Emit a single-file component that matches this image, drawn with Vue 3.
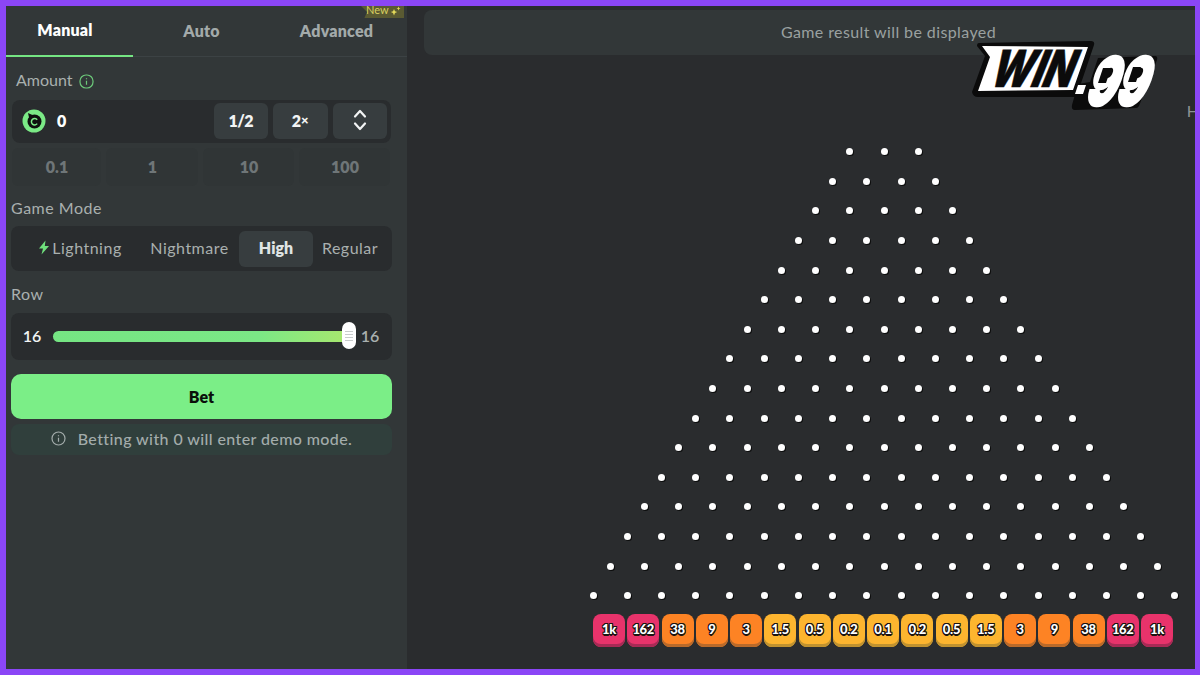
<template>
  <div class="frame">
    <aside class="panel">
      <nav class="tabs">
        <div v-for="t in tabs" :key="t" :class="['tab', 'tab-' + t.toLowerCase()]">{{ t }}</div>
        <div class="new-badge">
          New
          <svg width="11" height="10" viewBox="0 0 11 10"><path d="M4 3l1 2.200L7.200 6 5 7 4 9.500 3 7 .8 6 3 5.200zM8.500 .5l.6 1.400 1.400.6-1.400.6-.6 1.400-.6-1.400-1.400-.6 1.400-.6z" fill="#e3d95a"/></svg>
        </div>
      </nav>

      <div class="body">
        <div class="label amount-label">
          Amount
          <svg class="info" width="15" height="15" viewBox="0 0 15 15" fill="none" stroke="#6cc97a" stroke-width="1.200"><rect x="1" y="1" width="13" height="13" rx="6"/><path d="M7.500 6.800v4M7.500 4.200v1"/></svg>
        </div>
        <div class="amount-box">
          <svg class="coin" width="24" height="24" viewBox="0 0 24 24">
            <circle cx="12" cy="12" r="11.500" fill="#7bea86"/>
            <circle cx="12.500" cy="12.500" r="7" fill="#0e100e"/>
            <path d="M6 4l5.500 2.500-4 4z" fill="#0e100e"/>
            <path d="M15.200 10.800a3.200 3.200 0 1 0 0 3.800" fill="none" stroke="#7bea86" stroke-width="1.500"/>
          </svg>
          <span class="amount-value">0</span>
          <button class="mini half">1/2</button>
          <button class="mini">2<small>×</small></button>
          <button class="mini">
            <svg width="14" height="24" viewBox="0 0 14 24" fill="none" stroke="#f2f4f4" stroke-width="2.200" stroke-linecap="round" stroke-linejoin="round"><path d="M2 8.500l5-5.500 5 5.500M2 15.500l5 5.500 5-5.500"/></svg>
          </button>
        </div>
        <div class="quick">
          <div v-for="q in quick" :key="q" class="quick-item">{{ q }}</div>
        </div>

        <div class="label mode-label">Game Mode</div>
        <div class="modes">
          <div class="mode mode-lightning">
            <svg width="12" height="15" viewBox="0 0 12 15"><path d="M7.500 .5L1 8.500h4L3.500 14.500 11 6H6.800z" fill="#6fe07c"/></svg>
            Lightning
          </div>
          <div class="mode mode-nightmare">Nightmare</div>
          <div class="mode mode-high">High</div>
          <div class="mode mode-regular">Regular</div>
        </div>

        <div class="label row-label">Row</div>
        <div class="slider-box">
          <span class="slider-val">16</span>
          <div class="track">
            <div class="thumb"><i></i><i></i><i></i><i></i></div>
          </div>
          <span class="slider-max">16</span>
        </div>

        <button class="bet">Bet</button>
        <div class="notice">
          <svg width="15" height="15" viewBox="0 0 15 15" fill="none" stroke="#a3acab" stroke-width="1.200"><circle cx="7.500" cy="7.500" r="6.500"/><path d="M7.500 6.800v4M7.500 4.200v1"/></svg>
          Betting with 0 will enter demo mode.
        </div>
      </div>
    </aside>

    <main class="game">
      <div class="result">Game result will be displayed</div>
      <div class="board">
        <div v-for="(count, r) in rows" :key="r" class="peg-row">
          <span v-for="n in count" :key="n" class="peg"></span>
        </div>
        <div class="slots">
          <div v-for="(s, i) in slots" :key="i" :class="['slot', s.tone]">{{ s.value }}</div>
        </div>
      </div>

      <span class="cut-letter">H</span>
      <svg class="logo" width="192" height="80" viewBox="0 0 192 80">
        <path d="M8 9L120 7q4 0 3 4L106 61q-1 2-3 2H7q-5 0-6-5L14 22 6 12q0-3 2-3z" fill="#0b0b0b"/>
        <path d="M11 12L117 13 102 56 7 57 19 23z" fill="#fff"/>
        <text class="logo-win" transform="translate(16 53) skewX(-22)" textLength="82" lengthAdjust="spacingAndGlyphs">WIN</text>
        <path d="M127 24L184 22q3 0 2 4L168 72q-1 2-3 2L104 76q-4 0-3-5L107 50l12-2z" fill="#0b0b0b"/>
        <path d="M107 51h8l-3 9h-8z" fill="#fff"/>
        <text class="logo-99" transform="translate(112 71) skewX(-20)" textLength="60" lengthAdjust="spacingAndGlyphs">99</text>
        <path d="M132 34h8l-5 15h-8zM162 33h8l-5 15h-8z" fill="#0b0b0b"/>
      </svg>
    </main>
  </div>
</template>

<script setup>
const tabs = ['Manual', 'Auto', 'Advanced']
const quick = ['0.1', '1', '10', '100']

// 16 rows, starts at 3 pegs
const rows = Array.from({ length: 16 }, (_, i) => i + 3)

const slots = ['1k', '162', '38', '9', '3', '1.5', '0.5', '0.2', '0.1', '0.2', '0.5', '1.5', '3', '9', '38', '162', '1k'].map((value) => {
  let tone = 'yellow'
  if (value === '1k' || value === '162') tone = 'pink'
  if (value === '38' || value === '9' || value === '3') tone = 'orange'
  return { value, tone }
})
</script>

<style>
html, body {
  margin: 0;
  background: #8b46f6;
}
</style>

<style scoped>
.frame {
  width: 1200px;
  height: 675px;
  box-sizing: border-box;
  padding: 6px 5px 6px 6px;
  background: #8b46f6;
  display: flex;
  overflow: hidden;
  font-family: "Lato", "Noto Sans", sans-serif;
}

.panel {
  width: 401px;
  flex: none;
  background: #323738;
  color: #a9b0af;
}

.tabs {
  position: relative;
  display: flex;
  height: 51px;
  box-sizing: border-box;
  border-bottom: 1px solid #3c4244;
}

.tab {
  display: flex;
  align-items: center;
  justify-content: center;
  padding-bottom: 3px;
  box-sizing: border-box;
  height: 51px;
  font-size: 16px;
  font-weight: 800;
  letter-spacing: .2px;
  color: #a3aaaa;
}

.tab-manual {
  width: 127px;
  padding-right: 9px;
  color: #fff;
  border-bottom: 2px solid #75e583;
}

.tab-auto {
  width: 137px;
}

.tab-advanced {
  width: 133px;
}

.new-badge {
  position: absolute;
  top: 0;
  right: 3px;
  width: 43px;
  height: 12px;
  padding-left: 5px;
  box-sizing: border-box;
  background: #5a5a32;
  color: #d8cf60;
  font-size: 11px;
  line-height: 8px;
  display: flex;
  gap: 1px;
  overflow: hidden;
  clip-path: polygon(0 0, 100% 0, 100% 100%, 8% 100%, 14% 50%);
}

.body {
  padding: 0 15px 0 5px;
}

.label {
  font-size: 16px;
  line-height: 20px;
  letter-spacing: .5px;
  color: #a9b0af;
}

.amount-label {
  display: flex;
  align-items: center;
  gap: 6px;
  margin: 13px 0 0 5px;
  letter-spacing: 0;
}

.info {
  margin-top: 2px;
}

.amount-box {
  margin: 10px 0 0 1px;
  height: 43px;
  width: 379px;
  box-sizing: border-box;
  padding: 3px 4px 4px 10px;
  background: #292c2e;
  border-radius: 8px;
  display: flex;
  align-items: center;
  gap: 5px;
}

.coin {
  flex: none;
}

.amount-value {
  flex: 1;
  margin: 0 0 2px 6px;
  color: #fff;
  font-weight: 800;
  font-size: 16px;
}

.mini {
  width: 54.500px;
  height: 36px;
  border: 0;
  border-radius: 6px;
  background: #373d3f;
  color: #f2f4f4;
  font: 800 16px "Lato", sans-serif;
  display: flex;
  align-items: center;
  justify-content: center;
  padding: 0 0 2px;
}

.half {
  letter-spacing: -.6px;
}

.mini small {
  font-size: 13px;
}

.quick {
  margin: 5px 0 0 1px;
  width: 379px;
  display: grid;
  grid-template-columns: 89px 92px 91px 91px;
  column-gap: 5px;
}

.quick-item {
  height: 38px;
  padding-left: 1px;
  padding-bottom: 1px;
  box-sizing: border-box;
  border-radius: 6px;
  background: #303536;
  color: #6f7678;
  font-size: 16px;
  font-weight: 800;
  display: flex;
  align-items: center;
  justify-content: center;
}

.mode-label {
  margin-top: 12px;
}

.modes {
  position: relative;
  margin-top: 8px;
  height: 45px;
  width: 381px;
  box-sizing: border-box;
  background: #292c2e;
  border-radius: 8px;
  display: flex;
  align-items: center;
  font-size: 16px;
  letter-spacing: .5px;
  color: #a9b0af;
}

.mode {
  height: 36px;
  padding-bottom: 2px;
  box-sizing: border-box;
  display: flex;
  align-items: center;
  justify-content: center;
  flex: none;
}

.mode-lightning {
  width: 128px;
  padding-left: 10px;
  gap: 2px;
}

.mode-nightmare {
  width: 100px;
  padding-left: 1px;
}

.mode-high {
  width: 74px;
  background: #373d3f;
  border-radius: 6px;
  color: #dfe4e4;
  font-weight: 800;
  letter-spacing: 0;
}

.mode-regular {
  width: 74px;
}

.row-label {
  margin-top: 13px;
}

.slider-box {
  margin-top: 9px;
  height: 47px;
  width: 381px;
  box-sizing: border-box;
  background: #292c2e;
  border-radius: 8px;
  display: flex;
  align-items: center;
  font-size: 16px;
  font-weight: 600;
}

.slider-val {
  width: 42px;
  margin-bottom: 3px;
  text-align: center;
  color: #f2f4f4;
}

.slider-max {
  width: 45px;
  margin-bottom: 3px;
  text-align: center;
  padding-left: 1px;
  box-sizing: border-box;
  color: #a9b0af;
}

.track {
  position: relative;
  flex: 1;
  height: 11px;
  border-radius: 6px;
  background: linear-gradient(90deg, #75e583 0%, #7be886 70%, #a8e76e 100%);
}

.thumb {
  position: absolute;
  right: -9px;
  top: -9px;
  width: 14px;
  height: 27px;
  border-radius: 7px;
  background: #fff;
  display: flex;
  flex-direction: column;
  justify-content: center;
  align-items: center;
  gap: 2px;
}

.thumb i {
  width: 8px;
  height: 1px;
  background: #c8cccc;
}

.bet {
  display: block;
  margin-top: 14px;
  width: 381px;
  height: 45px;
  border: 0;
  border-radius: 10px;
  background: #7bee87;
  color: #0a0f0a;
  font: 800 16px "Lato", sans-serif;
}

.notice {
  margin-top: 5px;
  width: 381px;
  height: 31px;
  padding-bottom: 3px;
  box-sizing: border-box;
  border-radius: 8px;
  background: #303f3c;
  color: #a3acab;
  font-size: 16px;
  font-weight: 500;
  letter-spacing: .4px;
  display: flex;
  align-items: center;
  justify-content: center;
  gap: 12px;
}

.game {
  position: relative;
  flex: 1;
  background: #2a2c2e;
  overflow: hidden;
  padding: 4px 0 0 17px;
}

.result {
  height: 45px;
  padding: 0 0 3px 158px;
  box-sizing: border-box;
  border-radius: 8px 0 0 8px;
  background: #323738;
  color: #9aa1a0;
  font-size: 16px;
  letter-spacing: .4px;
  display: flex;
  align-items: center;
  justify-content: center;
}

.board {
  margin: 82px 0 0 150px;
  width: 620px;
}

.peg-row {
  height: 29.600px;
  display: flex;
  align-items: center;
  justify-content: center;
  gap: 27.240px;
}

.peg {
  width: 7px;
  height: 7px;
  border-radius: 50%;
  background: #fff;
  box-shadow: 1px 1px 0 #0d0e0e;
}

.slots {
  margin-top: 3px;
  display: flex;
  justify-content: center;
  gap: 2.250px;
  padding-right: 2px;
}

.slot {
  width: 32px;
  height: 33px;
  box-sizing: border-box;
  border-radius: 8px;
  padding-bottom: 2px;
  display: flex;
  align-items: center;
  justify-content: center;
  color: #fff;
  font-size: 13px;
  font-weight: 900;
  letter-spacing: -.3px;
  text-shadow: 1px 0 0 #1c1410, -1px 0 0 #1c1410, 0 1px 0 #1c1410, 0 -1px 0 #1c1410, 1px 1px 0 #1c1410, -1px 1px 0 #1c1410, 1px -1px 0 #1c1410, -1px -1px 0 #1c1410, 0 2px 0 #1c1410;
}

.pink {
  background: #e8336b;
  box-shadow: inset 0 -3px 0 #a82a55;
}

.orange {
  background: #fd8324;
  box-shadow: inset 0 -3px 0 #b96a2a;
}

.yellow {
  background: #fdb52f;
  box-shadow: inset 0 -3px 0 #c0922f;
}

.cut-letter {
  position: absolute;
  right: -4px;
  top: 95px;
  font-size: 16px;
  color: #8d9393;
}

.logo {
  position: absolute;
  left: 564px;
  top: 28px;
}

.logo-win {
  font: 900 51px "Inter", sans-serif;
  fill: #0b0b0b;
  stroke: #0b0b0b;
  stroke-width: .6px;
}

.logo-99 {
  font: 900 66px "Inter", sans-serif;
  fill: #fff;
  stroke: #fff;
  stroke-width: 3px;
  stroke-linejoin: miter;
}
</style>
